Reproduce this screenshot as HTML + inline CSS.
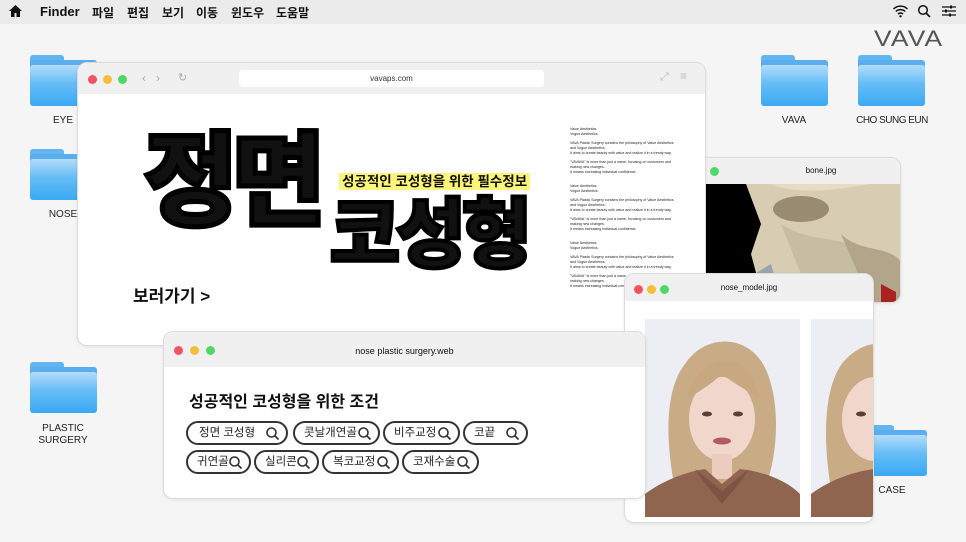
<!DOCTYPE html>
<html><head><meta charset="utf-8"><style>
*{margin:0;padding:0;box-sizing:border-box}
body{width:966px;height:542px;overflow:hidden;background:#f5f5f5;position:relative;font-family:"Liberation Sans","Noto Sans CJK KR",sans-serif;color:#111}
.abs{position:absolute}
.menu{left:0;top:0;width:966px;height:24px;background:#ebebeb;font-size:12px;font-weight:bold}
.menu span{position:absolute;top:4px}
.folder{position:absolute;width:67px;height:51px}
.folder .tab{position:absolute;left:0;top:0;width:34px;height:10px;background:#62b5f0;border-radius:3px 3px 0 0}
.folder .tab2{position:absolute;left:0;top:5px;width:100%;height:8px;background:#5aaeee;border-radius:3px 3px 0 0}
.folder .bd{position:absolute;left:0;top:10px;width:100%;height:41px;border-radius:3px;background:linear-gradient(#b3dcfa,#66bdf6 45%,#3aa9f4)}
.lbl{position:absolute;font-size:10px;color:#222;text-align:center;width:100px;line-height:12px}
.win{position:absolute;background:#fff;border-radius:10px;border:1px solid #dcdcdc;overflow:hidden;box-shadow:0 1px 3px rgba(0,0,0,.08)}
.tb{position:absolute;left:0;top:0;width:100%;background:#f0f0f0}
.dot{position:absolute;width:9px;height:9px;border-radius:50%}
.r{background:#f35262}.y{background:#f6bc3c}.g{background:#4fd865}
.chip{position:absolute;height:24px;border:2px solid #333;border-radius:12px;font-size:11.5px;line-height:20px;padding-left:11px;color:#222}
.chip svg{position:absolute;right:6px;top:3px}
.small{font-size:3.6px;line-height:5px;color:#222}
.small p{margin-bottom:4px}
</style></head><body>
<div class="abs menu">
<svg class="abs" style="left:8px;top:4px" width="15" height="14" viewBox="0 0 15 14"><path d="M7.5 1L1 7h2v6h3.5V9h2v4H12V7h2z" fill="#111"/></svg>
<span style="left:40px;font-size:13px">Finder</span><span style="left:92px">파일</span><span style="left:127px">편집</span><span style="left:162px">보기</span><span style="left:196px">이동</span><span style="left:231px">윈도우</span><span style="left:276px">도움말</span>
<svg class="abs" style="left:892px;top:4px" width="17" height="14" viewBox="0 0 17 14"><path d="M1.5 5a10 10 0 0 1 14 0M3.8 7.5a7 7 0 0 1 9.4 0M6 10a3.8 3.8 0 0 1 5 0" stroke="#111" stroke-width="1.5" fill="none"/><circle cx="8.5" cy="12.3" r="1.2" fill="#111"/></svg>
<svg class="abs" style="left:917px;top:4px" width="14" height="14" viewBox="0 0 14 14"><circle cx="6" cy="6" r="4.3" stroke="#111" stroke-width="1.5" fill="none"/><path d="M9 9l4 4" stroke="#111" stroke-width="1.6"/></svg>
<svg class="abs" style="left:941px;top:4px" width="16" height="14" viewBox="0 0 16 14"><path d="M1 3h14M1 7h14M1 11h14" stroke="#111" stroke-width="1.2"/><rect x="9" y="1.5" width="2" height="3" fill="#111"/><rect x="4" y="5.5" width="2" height="3" fill="#111"/><rect x="8" y="9.5" width="2" height="3" fill="#111"/></svg>
</div>
<div class="abs" style="left:874px;top:26px;font-size:22px;letter-spacing:1px;color:#555;font-weight:300;transform:scaleX(1.2);transform-origin:left">VAVA</div>

<div class="folder" style="left:30px;top:55px"><div class="tab"></div><div class="tab2"></div><div class="bd"></div></div>
<div class="lbl" style="left:13px;top:115px">EYE</div>
<div class="folder" style="left:30px;top:149px"><div class="tab"></div><div class="tab2"></div><div class="bd"></div></div>
<div class="lbl" style="left:13px;top:209px">NOSE</div>
<div class="folder" style="left:30px;top:362px"><div class="tab"></div><div class="tab2"></div><div class="bd"></div></div>
<div class="lbl" style="left:13px;top:423px">PLASTIC<br>SURGERY</div>
<div class="folder" style="left:761px;top:55px"><div class="tab"></div><div class="tab2"></div><div class="bd"></div></div>
<div class="lbl" style="left:744px;top:115px">VAVA</div>
<div class="folder" style="left:858px;top:55px"><div class="tab"></div><div class="tab2"></div><div class="bd"></div></div>
<div class="lbl" style="left:842px;top:115px;letter-spacing:-0.5px">CHO SUNG EUN</div>
<div class="folder" style="left:860px;top:425px"><div class="tab"></div><div class="tab2"></div><div class="bd"></div></div>
<div class="lbl" style="left:842px;top:485px">CASE</div>

<!-- bone window -->
<div class="win" style="left:690px;top:157px;width:211px;height:146px">
<div class="tb" style="height:26px"><div class="dot g" style="left:19px;top:9px"></div><div class="abs" style="left:60px;width:140px;text-align:center;top:8px;font-size:8px">bone.jpg</div></div>
<div class="abs" style="left:0;top:26px;width:211px;height:120px;background:#000"></div>
<svg class="abs" style="left:0;top:26px" width="211" height="120" viewBox="0 0 211 120"><path d="M55 0H211V120H85L68 100L60 70L70 40Z" fill="#d8ccb2"/><path d="M80 0C110 12 150 5 180 0Z" fill="#e6dcc6"/><ellipse cx="110" cy="25" rx="28" ry="13" fill="#9a8c72"/><path d="M90 40C120 60 150 50 180 70L190 110L130 120L110 90Z" fill="#c8bca2"/><path d="M55 95L80 80L92 120H50Z" fill="#9aa4aa"/><path d="M150 50C170 70 200 60 211 80V120H180Z" fill="#b3a58a"/><path d="M190 100L205 108V120H190Z" fill="#a22"/></svg>
</div>

<!-- main browser -->
<div class="win" style="left:77px;top:62px;width:629px;height:284px">
<div class="tb" style="height:31px">
<div class="dot r" style="left:10px;top:12px"></div><div class="dot y" style="left:25px;top:12px"></div><div class="dot g" style="left:40px;top:12px"></div>
<div class="abs" style="left:64px;top:8px;color:#aaa;font-size:12px">‹&nbsp;&nbsp;&nbsp;›</div>
<div class="abs" style="left:100px;top:8px;color:#aaa;font-size:11px">↻</div>
<div class="abs" style="left:161px;top:7px;width:305px;height:17px;background:#fff;border-radius:4px;font-size:8px;text-align:center;line-height:17px;color:#333">vavaps.com</div>
<div class="abs" style="left:582px;top:8px;color:#bbb;font-size:11px">⤢</div>
<div class="abs" style="left:602px;top:6px;color:#bbb;font-size:12px">≡</div>
</div>
<div class="abs" style="left:66px;top:63px;font-size:100px;font-weight:900;letter-spacing:-6px;line-height:110px;transform:scale(1.02,1.02);transform-origin:left top;-webkit-text-stroke:5px #000">정면</div>
<div class="abs" style="left:261px;top:110px;background:#fbf57a;font-size:13.5px;font-weight:bold;padding:0 3px;line-height:17px">성공적인 코성형을 위한 필수정보</div>
<div class="abs" style="left:252px;top:128px;font-size:76px;font-weight:900;letter-spacing:-4px;line-height:90px;-webkit-text-stroke:4px #000">코성형</div>
<div class="abs" style="left:55px;top:219px;font-size:17px;font-weight:bold">보러가기 &gt;</div>
<div class="abs small" style="left:492px;top:64px;width:108px">
<p>Value Aesthetics.<br>Vogue Aesthetics.</p><p>VAVA Plastic Surgery contains the philosophy of Value Aesthetics and Vogue Aesthetics.<br>It aims to create beauty with value and realize it in a trendy way.</p><p>"VAVAVA" is more than just a name, focusing on customers and making new changes.<br>It means increasing individual confidence.</p><br>
<p>Value Aesthetics.<br>Vogue Aesthetics.</p><p>VAVA Plastic Surgery contains the philosophy of Value Aesthetics and Vogue Aesthetics.<br>It aims to create beauty with value and realize it in a trendy way.</p><p>"VAVAVA" is more than just a name, focusing on customers and making new changes.<br>It means increasing individual confidence.</p><br>
<p>Value Aesthetics.<br>Vogue Aesthetics.</p><p>VAVA Plastic Surgery contains the philosophy of Value Aesthetics and Vogue Aesthetics.<br>It aims to create beauty with value and realize it in a trendy way.</p><p>"VAVAVA" is more than just a name, focusing on customers and making new changes.<br>It means increasing individual confidence.</p>
</div>
</div>

<!-- nose model window -->
<div class="win" style="left:624px;top:273px;width:250px;height:250px">
<div class="tb" style="height:27px"><div class="dot r" style="left:9px;top:11px"></div><div class="dot y" style="left:22px;top:11px"></div><div class="dot g" style="left:35px;top:11px"></div><div class="abs" style="left:0;width:100%;text-align:center;top:9px;font-size:8px">nose_model.jpg</div></div>
<svg class="abs" style="left:20px;top:45px" width="155" height="198" viewBox="0 0 155 198"><rect width="155" height="198" fill="#eceef3"/><path d="M30 170C20 120 20 70 40 45C60 15 100 15 118 45C135 75 135 130 120 170Z" fill="#c9ab86"/><ellipse cx="77" cy="100" rx="33" ry="42" fill="#f1d7cb"/><path d="M42 80C50 50 70 40 80 42C95 40 110 55 114 80C100 70 85 62 77 55C68 64 55 72 42 80Z" fill="#c8a880"/><ellipse cx="62" cy="95" rx="5" ry="2.5" fill="#5a4038"/><ellipse cx="93" cy="95" rx="5" ry="2.5" fill="#5a4038"/><ellipse cx="77" cy="122" rx="9" ry="3.5" fill="#b55a62"/><rect x="67" y="135" width="20" height="25" fill="#ecccbf"/><path d="M0 175C20 160 45 152 60 150L77 165L95 150C115 152 140 160 155 175V198H0Z" fill="#8f6550"/><path d="M50 150L77 172L104 150L96 162L77 185L58 162Z" fill="#7c5443"/></svg>
<svg class="abs" style="left:186px;top:45px" width="64" height="198" viewBox="0 0 64 198"><rect width="64" height="198" fill="#eceef3"/><path d="M20 170C10 110 15 60 35 40C50 25 64 25 64 25V170Z" fill="#c9ab86"/><ellipse cx="64" cy="100" rx="33" ry="42" fill="#f1d7cb"/><ellipse cx="50" cy="95" rx="5" ry="2.5" fill="#5a4038"/><path d="M0 175C20 160 45 152 64 150V198H0Z" fill="#8f6550"/></svg>
</div>

<!-- nose plastic surgery window -->
<div class="win" style="left:163px;top:331px;width:483px;height:168px">
<div class="tb" style="height:35px"><div class="dot r" style="left:10px;top:14px"></div><div class="dot y" style="left:26px;top:14px"></div><div class="dot g" style="left:42px;top:14px"></div><div class="abs" style="left:0;width:100%;text-align:center;top:14px;font-size:9px">nose plastic surgery.web</div></div>
<div class="abs" style="left:25px;top:56px;font-size:16px;font-weight:bold">성공적인 코성형을 위한 조건</div>
</div>
<div class="chip" style="left:186px;top:421px;width:102px">정면 코성형<svg width="15" height="15" viewBox="0 0 15 15"><circle cx="6.5" cy="6.5" r="4.5" stroke="#333" stroke-width="1.6" fill="none"/><path d="M10 10l3.5 3.5" stroke="#333" stroke-width="1.8"/></svg></div>
<div class="chip" style="left:293px;top:421px;width:87px;padding-left:9px">콧날개연골<svg width="15" height="15" viewBox="0 0 15 15"><circle cx="6.5" cy="6.5" r="4.5" stroke="#333" stroke-width="1.6" fill="none"/><path d="M10 10l3.5 3.5" stroke="#333" stroke-width="1.8"/></svg></div>
<div class="chip" style="left:383px;top:421px;width:77px;padding-left:9px">비주교정<svg width="15" height="15" viewBox="0 0 15 15"><circle cx="6.5" cy="6.5" r="4.5" stroke="#333" stroke-width="1.6" fill="none"/><path d="M10 10l3.5 3.5" stroke="#333" stroke-width="1.8"/></svg></div>
<div class="chip" style="left:463px;top:421px;width:65px;padding-left:9px">코끝<svg width="15" height="15" viewBox="0 0 15 15"><circle cx="6.5" cy="6.5" r="4.5" stroke="#333" stroke-width="1.6" fill="none"/><path d="M10 10l3.5 3.5" stroke="#333" stroke-width="1.8"/></svg></div>
<div class="chip" style="left:186px;top:450px;width:65px;padding-left:9px">귀연골<svg width="15" height="15" viewBox="0 0 15 15"><circle cx="6.5" cy="6.5" r="4.5" stroke="#333" stroke-width="1.6" fill="none"/><path d="M10 10l3.5 3.5" stroke="#333" stroke-width="1.8"/></svg></div>
<div class="chip" style="left:254px;top:450px;width:65px;padding-left:9px">실리콘<svg width="15" height="15" viewBox="0 0 15 15"><circle cx="6.5" cy="6.5" r="4.5" stroke="#333" stroke-width="1.6" fill="none"/><path d="M10 10l3.5 3.5" stroke="#333" stroke-width="1.8"/></svg></div>
<div class="chip" style="left:322px;top:450px;width:77px;padding-left:9px">복코교정<svg width="15" height="15" viewBox="0 0 15 15"><circle cx="6.5" cy="6.5" r="4.5" stroke="#333" stroke-width="1.6" fill="none"/><path d="M10 10l3.5 3.5" stroke="#333" stroke-width="1.8"/></svg></div>
<div class="chip" style="left:402px;top:450px;width:77px;padding-left:9px">코재수술<svg width="15" height="15" viewBox="0 0 15 15"><circle cx="6.5" cy="6.5" r="4.5" stroke="#333" stroke-width="1.6" fill="none"/><path d="M10 10l3.5 3.5" stroke="#333" stroke-width="1.8"/></svg></div>
</body></html>
